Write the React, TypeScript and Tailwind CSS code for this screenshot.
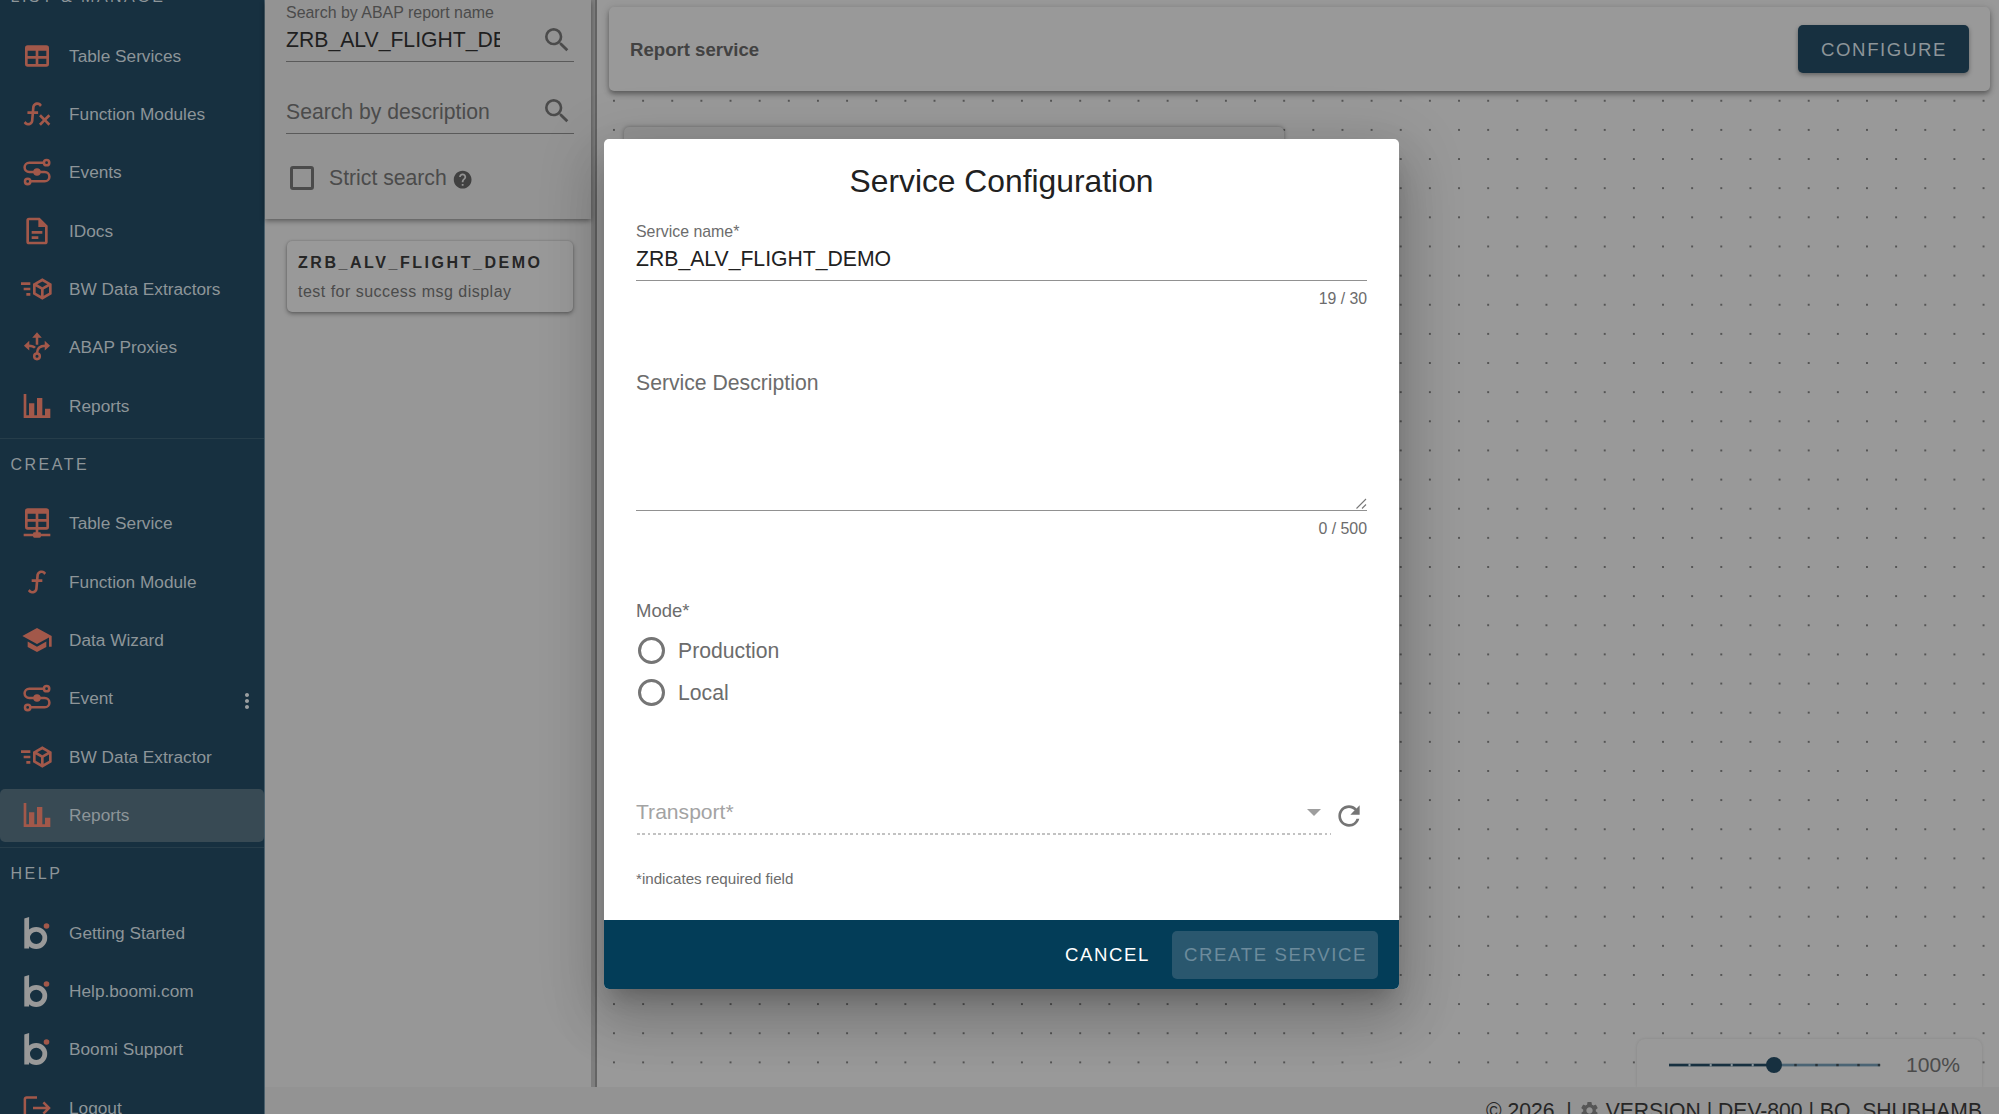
import React, { useState } from 'react';
import { MdHelp, MdMoreVert, MdRefresh, MdSchool, MdSearch, MdSettings } from 'react-icons/md';

interface NavItem {
  label: string;
  icon: React.ReactNode;
  active?: boolean;
  menu?: boolean;
}

interface NavGroup {
  title: string;
  items: NavItem[];
}

const PathIcon: React.FC<{ d: string }> = ({ d }) => (
  <svg viewBox="0 0 24 24" className="w-8 h-8 fill-current">
    <path d={d} />
  </svg>
);

const StrokeIcon: React.FC<{ children: React.ReactNode }> = ({ children }) => (
  <svg viewBox="0 0 24 24" className="w-8 h-8" fill="none" stroke="currentColor" strokeWidth="1.9">
    {children}
  </svg>
);

const TableIcon = () => (
  <PathIcon d="M5,4H19A2,2 0 0,1 21,6V18A2,2 0 0,1 19,20H5A2,2 0 0,1 3,18V6A2,2 0 0,1 5,4M5,8V12H11V8H5M13,8V12H19V8H13M5,14V18H11V14H5M13,14V18H19V14H13Z" />
);

const TableNetworkIcon = () => (
  <PathIcon d="M5 1H19a2 2 0 0 1 2 2v12a2 2 0 0 1-2 2h-6v2h1a1 1 0 0 1 1 1h7v2h-7a1 1 0 0 1-1 1h-4a1 1 0 0 1-1-1H2v-2h7a1 1 0 0 1 1-1h1v-2H5a2 2 0 0 1-2-2V3a2 2 0 0 1 2-2M5 5v4h6V5H5m8 0v4h6V5h-6m-8 6v4h6v-4H5m8 0v4h6v-4h-6z" />
);

const FunctionVariantIcon = () => (
  <PathIcon d="M12.42,5.29C11.32,5.19 10.35,6 10.25,7.11L10,10H12.82V12H9.82L9.38,17.07C9.18,19.27 7.24,20.9 5.04,20.7C3.79,20.59 2.66,19.9 2,18.83L3.5,17.33C3.83,18.38 4.96,18.97 6,18.63C6.78,18.39 7.33,17.7 7.4,16.89L7.82,12H4.82V10H8L8.27,6.93C8.46,4.73 10.39,3.1 12.6,3.28C13.86,3.39 15,4.09 15.66,5.17L14.16,6.67C13.91,5.9 13.23,5.36 12.42,5.29M22,13.65L20.59,12.24L17.76,15.07L14.93,12.24L13.5,13.65L16.35,16.5L13.5,19.31L14.93,20.72L17.76,17.9L20.59,20.72L22,19.31L19.17,16.5L22,13.65Z" />
);

const FunctionIcon = () => (
  <PathIcon d="M15.6,5.29C14.5,5.19 13.53,6 13.43,7.11L13.18,10H16V12H13L12.56,17.07C12.37,19.27 10.43,20.9 8.23,20.7C6.92,20.59 5.82,19.86 5.17,18.83L6.67,17.33C6.91,18.07 7.57,18.64 8.4,18.71C9.5,18.81 10.47,18 10.57,16.89L11,12H8V10H11.17L11.44,6.93C11.63,4.73 13.57,3.1 15.77,3.3C17.08,3.41 18.18,4.14 18.83,5.17L17.33,6.67C17.09,5.93 16.43,5.36 15.6,5.29Z" />
);

const EventIcon = () => (
  <StrokeIcon>
    <path d="M17 5H6.2a3.4 3.4 0 0 0 0 7H17.8a3.4 3.4 0 0 1 0 7H7" />
    <circle cx="19.2" cy="5" r="2" />
    <circle cx="5" cy="19.1" r="2" />
    <circle cx="12" cy="12" r="2.8" fill="currentColor" stroke="none" />
  </StrokeIcon>
);

const DocumentIcon = () => (
  <PathIcon d="M6,2A2,2 0 0,0 4,4V20A2,2 0 0,0 6,22H18A2,2 0 0,0 20,20V8L14,2H6M6,4H13V9H18V20H6V4M8,12V14H16V12H8M8,16V18H13V16H8Z" />
);

const ExtractorIcon = () => (
  <PathIcon d="M16,4L9,8.04V15.96L16,20L23,15.96V8.04M16,6.31L19.8,8.5L16,10.69L12.21,8.5M0,7V9H7V7M11,10.11L15,12.42V17.11L11,14.81M21,10.11V14.81L17,17.11V12.42M2,11V13H7V11M4,15V17H7V15" />
);

const ProxyIcon = () => (
  <StrokeIcon>
    <path d="M12 4v6.3M5.8 11c2.2 0 3.7.4 4.7 1.6M12 16.7c0-3.6 2-5.7 6.4-5.7" />
    <circle cx="12" cy="19" r="2.1" />
    <path d="M12 1l3.6 4H8.4zM2.2 11l4-3.6v7.2zM21.8 11l-4-3.6v7.2z" fill="currentColor" stroke="none" />
  </StrokeIcon>
);

const ChartIcon = () => (
  <PathIcon d="M22,21H2V3H4V19H6V10H10V19H12V6H16V19H18V14H22V21Z" />
);

const LogoutIcon = () => (
  <StrokeIcon>
    <path d="M12 4.1H4.2a1.3 1.3 0 0 0-1.3 1.3v13.2a1.3 1.3 0 0 0 1.3 1.3H12M9 12h12M16.8 7.8L21 12l-4.2 4.2" />
  </StrokeIcon>
);

const BoomiIcon = () => (
  <svg viewBox="0 0 32 32" className="w-8 h-8 overflow-visible">
    <path d="M3.3 1.6L8.1 0V31.5H3.3z" fill="#999999" />
    <circle cx="15.2" cy="20.9" r="8.6" fill="none" stroke="#999999" strokeWidth="4.8" />
    <circle cx="25.5" cy="9" r="2.8" fill="#a2584a" />
  </svg>
);

const groups: NavGroup[] = [
  {
    title: 'LIST & MANAGE',
    items: [
      { label: 'Table Services', icon: <TableIcon /> },
      { label: 'Function Modules', icon: <FunctionVariantIcon /> },
      { label: 'Events', icon: <EventIcon /> },
      { label: 'IDocs', icon: <DocumentIcon /> },
      { label: 'BW Data Extractors', icon: <ExtractorIcon /> },
      { label: 'ABAP Proxies', icon: <ProxyIcon /> },
      { label: 'Reports', icon: <ChartIcon /> },
    ],
  },
  {
    title: 'CREATE',
    items: [
      { label: 'Table Service', icon: <TableNetworkIcon /> },
      { label: 'Function Module', icon: <FunctionIcon /> },
      { label: 'Data Wizard', icon: <MdSchool className="w-8 h-8" /> },
      { label: 'Event', icon: <EventIcon />, menu: true },
      { label: 'BW Data Extractor', icon: <ExtractorIcon /> },
      { label: 'Reports', icon: <ChartIcon />, active: true },
    ],
  },
  {
    title: 'HELP',
    items: [
      { label: 'Getting Started', icon: <BoomiIcon /> },
      { label: 'Help.boomi.com', icon: <BoomiIcon /> },
      { label: 'Boomi Support', icon: <BoomiIcon /> },
      { label: 'Logout', icon: <LogoutIcon /> },
    ],
  },
];

const Sidebar = () => (
  <nav className="w-[265px] shrink-0 h-full overflow-hidden bg-[#173040] border-r border-[#4a5f6b]">
    <div className="-mt-[30px]">
      {groups.map((group) => (
        <div key={group.title}>
          <div className="h-[59.3px] border-t border-[#263d4a] pt-[16.4px] pl-[10.5px] text-[16px] leading-5 tracking-[2.5px] text-[#8d9599]">
            {group.title}
          </div>
          {group.items.map((item) => (
            <div
              key={item.label}
              className={`h-[53px] mb-[5.33px] pl-[21px] pr-[5px] flex items-center rounded-[5px] ${item.active ? 'bg-[#384a54]' : ''}`}
            >
              <span className="w-8 h-8 text-[#a2584a]">{item.icon}</span>
              <span className="ml-[16px] text-[17.25px] leading-6 text-[#8d9599]">{item.label}</span>
              {item.menu && <MdMoreVert className="ml-auto mt-[5px] w-6 h-6 text-[#9b9fa1]" />}
            </div>
          ))}
        </div>
      ))}
    </div>
  </nav>
);

const SearchPanel = () => (
  <aside className="w-[332px] shrink-0 flex flex-col bg-[#979797] border-r-2 border-[#646464]">
    <div className="flex-1 flex flex-col border-r-4 border-[#7e7e7e]">
      <div className="h-[219px] bg-[#939393] pl-[21px] pr-[17px] shadow-[0_2px_5px_rgba(0,0,0,0.4)]">
        <div className="h-[62px] pt-[3px] border-b border-[#5a5a5a]">
          <div className="text-[15.95px] leading-5 text-[#4b4b4b] whitespace-nowrap">Search by ABAP report name</div>
          <div className="flex items-start justify-between">
            <div className="w-[214px] mt-[3px] overflow-hidden whitespace-nowrap text-[21.2px] leading-7 text-[#1f1f1f]">
              ZRB_ALV_FLIGHT_DEMO
            </div>
            <MdSearch className="w-8 h-8 mt-px mr-px text-[#4b4b4b]" />
          </div>
        </div>
        <div className="h-[72px] flex items-end justify-between border-b border-[#5a5a5a] text-[#4b4b4b]">
          <div className="mb-[7px] text-[21.2px] leading-7">Search by description</div>
          <MdSearch className="w-8 h-8 mb-[6px] mr-px" />
        </div>
        <div className="mt-[28px] flex items-center text-[#4b4b4b]">
          <span className="ml-[4px] mt-px w-6 h-6 border-3 border-[#4b4b4b] rounded-[3px]"></span>
          <span className="ml-[15px] mt-[2px] text-[21.2px] leading-7">Strict search</span>
          <MdHelp className="ml-[5px] mt-[5px] w-[21.3px] h-[21.3px] text-[#414141]" />
        </div>
      </div>

      <div className="mt-[22px] ml-[22px] w-[286px] h-[71px] bg-[#999999] rounded-[5px] pl-[11px] pt-[12px] shadow-[0_2px_4px_rgba(0,0,0,0.35),0_0_2px_rgba(0,0,0,0.2)] whitespace-nowrap">
        <div className="text-[16px] font-bold leading-5 tracking-[2.55px] text-[#262626]">ZRB_ALV_FLIGHT_DEMO</div>
        <div className="mt-[9px] text-[16px] leading-5 tracking-[0.48px] text-[#4b4b4b]">test for success msg display</div>
      </div>
    </div>
  </aside>
);

const ZoomSlider = () => (
  <svg width="213" height="18" viewBox="0 0 213 18">
    <rect x="0" y="7.7" width="106" height="2.7" fill="#173040" />
    <rect x="106" y="7.7" width="105" height="2.7" fill="#4b6474" />
    {[20.5, 41.7, 62.7, 83.7].map((x) => (
      <rect key={x} x={x - 1} y="7.7" width="2" height="2.7" fill="#87939a" />
    ))}
    {[126.5, 147.5, 168.5, 189.5, 210].map((x) => (
      <rect key={x} x={x - 1.2} y="7.9" width="2.4" height="2.3" fill="#2a3338" />
    ))}
    <circle cx="105" cy="9" r="8" fill="#173040" />
  </svg>
);

const Workspace = () => (
  <main className="relative flex-1 overflow-hidden bg-[#999999] flex flex-col">
    <svg className="absolute inset-0 w-full h-full">
      <defs>
        <pattern id="grid-dots" x="2.4" y="27.9" width="29.14" height="29.14" patternUnits="userSpaceOnUse">
          <circle cx="14.57" cy="14.57" r="0.95" fill="#3c3c3c" />
        </pattern>
      </defs>
      <rect y="92" width="100%" height="100%" fill="url(#grid-dots)" />
    </svg>
    <header className="relative mt-[7px] ml-[12px] mr-[9px] h-[84px] px-[21px] flex items-center justify-between bg-[#999999] rounded-[5px] shadow-[0_3px_5px_rgba(0,0,0,0.35),0_1px_10px_rgba(0,0,0,0.12)]">
      <h1 className="mt-[2px] text-[18.6px] font-bold leading-6 text-[#424242]">Report service</h1>
      <button className="w-[171px] h-[48px] pl-px pt-px rounded-[5px] bg-[#173040] text-[#8d9599] text-[18.6px] leading-6 tracking-[1.6px] shadow-[0_2px_4px_rgba(0,0,0,0.35)]">
        CONFIGURE
      </button>
    </header>
    <section className="relative mt-[36px] ml-[27px] w-[660px] h-[400px] bg-[#939393] rounded-[5px] shadow-[0_0_4px_rgba(0,0,0,0.35)]"></section>
    <div className="relative mt-auto ml-auto mr-[17px] w-[345px] h-[48px] pl-[32px] pr-[22px] flex items-center justify-between bg-[#999999] rounded-t-[8px] shadow-[0_0_3px_rgba(0,0,0,0.12)]">
      <div className="mt-[3px]"><ZoomSlider /></div>
      <span className="mt-[4px] text-[21.1px] leading-7 text-[#4b4b4b]">100%</span>
    </div>
  </main>
);

const Footer = () => (
  <footer className="h-[27px] shrink-0 overflow-hidden bg-[#939393] pt-[10px] pr-[17px] flex justify-end text-[21.15px] leading-7 text-[#262626] whitespace-pre">
    <span>© 2026  | </span>
    <MdSettings className="w-[21px] h-[21px] ml-[1px] mr-[6px] mt-[3px] shrink-0 text-[#565656]" />
    <span>VERSION | DEV-800 | BO_SHUBHAMB</span>
  </footer>
);

const ServiceDialog = () => {
  const [mode, setMode] = useState('');

  return (
    <div className="w-[795px] h-[850px] flex flex-col overflow-hidden rounded-[5px] bg-white text-[#6c6c6c]">
      <div className="h-[781px] px-[32px] pt-[22px] flex flex-col">
        <h2 className="text-center text-[31.8px] leading-10 text-[#212121]">Service Configuration</h2>

        {/* Name */}
        <div className="mt-[21px] h-[59px] border-b border-[#919191]">
          <div className="text-[15.9px] leading-5">Service name*</div>
          <div className="mt-[3px] text-[21.2px] leading-7 text-[#212121]">ZRB_ALV_FLIGHT_DEMO</div>
        </div>
        <div className="mt-[8px] text-right text-[15.8px] leading-5">19 / 30</div>

        {/* Description */}
        <div className="mt-[60px] h-[142px] flex items-start justify-between border-b border-[#919191]">
          <div className="text-[21.2px] leading-7">Service Description</div>
          <svg className="self-end mb-px" width="11" height="11" viewBox="0 0 11 11" stroke="#777777" strokeWidth="1.1">
            <path d="M0.5 10.5L10 1M6 10.5L10 6.5" />
          </svg>
        </div>
        <div className="mt-[8px] text-right text-[15.9px] leading-5">0 / 500</div>

        {/* Mode */}
        <div className="mt-[60px] text-[18.5px] leading-6">Mode*</div>
        <div className="mt-[6px]">
          {['Production', 'Local'].map((m) => (
            <button key={m} onClick={() => setMode(m)} className="h-[42.4px] flex items-center text-[21.2px] leading-7">
              <span className="ml-[2px] w-[27px] h-[27px] rounded-full border-3 border-[#757575] flex items-center justify-center">
                {mode === m && <span className="w-3 h-3 rounded-full bg-[#033d58]"></span>}
              </span>
              <span className="ml-[13px] mt-px">{m}</span>
            </button>
          ))}
        </div>

        {/* Transport */}
        <div className="mt-[84px] flex items-start">
          <div className="w-[695px]">
            <div className="flex items-center justify-between text-[21.1px] leading-7 text-[#a3a3a3]">
              Transport*
              <svg className="mr-[10px] mt-px" width="14" height="7" viewBox="0 0 14 7">
                <path d="M0 0h14L7 7z" fill="#9e9e9e" />
              </svg>
            </div>
            <div className="mt-[7px] ml-[1px] h-[2px] bg-[repeating-linear-gradient(to_right,#c2c2c2_0,#c2c2c2_2.8px,transparent_2.8px,transparent_5.33px)]"></div>
          </div>
          <MdRefresh className="ml-[2px] mt-[2px] w-8 h-8 text-[#757575]" />
        </div>

        <p className="mt-[34px] text-[15.15px] leading-5">*indicates required field</p>
      </div>

      <div className="flex-1 pr-[21px] flex items-center justify-end bg-[#033d58] text-[18.6px] leading-6 tracking-[1.6px]">
        <button className="mr-[22px] text-white">CANCEL</button>
        <button disabled className="w-[206px] h-[48px] pl-px rounded-[5px] bg-[#2a576e] text-[#6c8b9c]">
          CREATE SERVICE
        </button>
      </div>
    </div>
  );
};

const App: React.FC = () => {
  return (
    <div className="relative w-[1999px] h-[1114px] flex overflow-hidden font-['Liberation_Sans',Arial,sans-serif]">
      <Sidebar />
      <div className="flex-1 min-w-0 flex flex-col">
        <div className="flex-1 min-h-0 flex">
          <SearchPanel />
          <Workspace />
        </div>
        <Footer />
      </div>

      <div className="absolute top-[139px] left-[604px] rounded-[5px] shadow-[0_15px_20px_-9px_rgba(0,0,0,0.2),0_32px_51px_4px_rgba(0,0,0,0.14),0_12px_61px_11px_rgba(0,0,0,0.12)]">
        <ServiceDialog />
      </div>
    </div>
  );
};

export default App;
